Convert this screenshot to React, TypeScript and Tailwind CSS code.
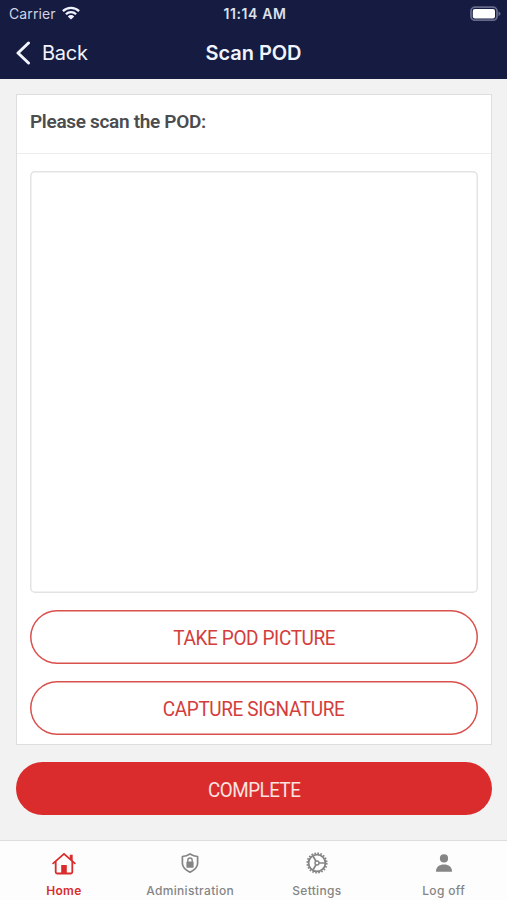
import type { ReactNode } from 'react';

export default function App() {
  return (
    <div className="flex h-[900px] w-[507px] flex-col overflow-hidden bg-[#f2f2f2] font-['Inter',sans-serif]">
      <header className="h-[79px] shrink-0 bg-[#151b41] text-[#f1f4fc]">
        <StatusBar />
        <NavBar title="Scan POD" />
      </header>

      <main className="flex-1 pt-[15px] pr-[15px] pl-4">
        <section className="h-[651px] border border-[#dedede] bg-white px-[13px]">
          <div className="-mx-[13px] h-[59px] border-b border-[#ededed] px-[13px] pt-[13px]">
            <h2 className="text-[19px] leading-[27px] font-semibold tracking-[-0.32px] whitespace-nowrap text-[#4a4c4e] font-['Roboto',sans-serif]">
              Please scan the POD:
            </h2>
          </div>
          <div className="mt-[17px] h-[422px] rounded-[5px] shadow-[inset_0_0_0_1.5px_#e3e3e3]" />
          <div className="mt-[17px] flex flex-col gap-[17px]">
            <OutlineButton>TAKE POD PICTURE</OutlineButton>
            <OutlineButton>CAPTURE SIGNATURE</OutlineButton>
          </div>
        </section>

        <button className="mt-[17px] h-[53px] w-full rounded-full bg-[#da2c2c] pt-[2px] text-[20px] tracking-[-0.5px] text-[#fbe3e1] font-['Roboto',sans-serif]">
          <span className="inline-block scale-x-94">COMPLETE</span>
        </button>
      </main>

      <nav className="grid h-[60px] shrink-0 grid-cols-4 border-t border-[#dddddd] bg-[#fdfdfd]">
        <Tab label="Home" active icon={<HomeIcon />} />
        <Tab label="Administration" icon={<ShieldIcon />} />
        <Tab label="Settings" icon={<GearIcon />} />
        <Tab label="Log off" icon={<PersonIcon />} />
      </nav>
    </div>
  );
}

function StatusBar() {
  return (
    <div className="grid h-[28px] grid-cols-3 items-center pr-[6px] pl-[9px] text-[14px] leading-none">
      <div className="flex items-center gap-[6px]">
        <span className="tracking-[0.1px] text-[#cfd3e3]">Carrier</span>
        <WifiIcon />
      </div>
      <span className="text-center text-[14px] font-semibold tracking-[0.6px] whitespace-nowrap text-[#dde1ed]">
        11:14 AM
      </span>
      <div className="flex justify-end pb-px">
        <BatteryIcon />
      </div>
    </div>
  );
}

function NavBar({ title }: { title: string }) {
  return (
    <div className="grid h-[49px] grid-cols-3 items-center px-[15px]">
      <button className="flex items-center gap-[11px] text-[20px] tracking-[-0.25px]">
        <svg width="16" height="24" viewBox="0 0 16 24" aria-hidden>
          <path
            d="M13.5 2 L3 12 L13.5 22"
            fill="none"
            stroke="currentColor"
            strokeWidth="3"
            strokeLinecap="round"
            strokeLinejoin="round"
          />
        </svg>
        Back
      </button>
      <h1 className="text-center text-[20px] font-semibold tracking-[-0.05px] whitespace-nowrap">{title}</h1>
    </div>
  );
}

function OutlineButton({ children }: { children: ReactNode }) {
  return (
    <button className="h-[54px] w-full rounded-full pt-[2px] text-[20px] tracking-[-0.4px] text-[#d33d3b] shadow-[inset_0_0_0_1.5px_#d9504d] font-['Roboto',sans-serif]">
      <span className="inline-block scale-x-95">{children}</span>
    </button>
  );
}

function Tab({ label, icon, active }: { label: string; icon: ReactNode; active?: boolean }) {
  return (
    <button
      className={`flex flex-col items-center pt-[10px] text-[12px] leading-[16px] tracking-[0.32px] ${
        active ? 'pl-px font-semibold text-[#d92d2d]' : 'font-medium text-[#858585]'
      }`}
    >
      {icon}
      <span className="mt-[8px]">{label}</span>
    </button>
  );
}

/* ---- icons ---- */

function WifiIcon() {
  return (
    <svg width="18" height="14" viewBox="0 0 18 14" className="-mt-[2px]" aria-hidden>
      <g fill="none" stroke="currentColor" strokeWidth="2.3">
        <path d="M0.9 5.1 A11.6 11.6 0 0 1 17.1 5.1" />
        <path d="M3.9 8.2 A7.3 7.3 0 0 1 14.1 8.2" />
      </g>
      <path d="M9 13.6 L5.8 10.4 A4.6 4.6 0 0 1 12.2 10.4 Z" fill="currentColor" />
    </svg>
  );
}

function BatteryIcon() {
  return (
    <svg width="31" height="16" viewBox="0 0 31 16" aria-hidden>
      <rect x="1" y="1.2" width="26" height="13" rx="4" fill="none" stroke="#666a89" strokeWidth="1.8" />
      <rect x="2.8" y="3" width="22.2" height="9.4" rx="2" fill="#fff" />
      <path d="M28.4 5.3 Q30.6 6.4 30.6 7.7 Q30.6 9 28.4 10.1 Z" fill="#666a89" />
    </svg>
  );
}

function HomeIcon() {
  return (
    <svg width="24" height="24" viewBox="0 0 24 24" aria-hidden>
      <g fill="none" stroke="currentColor" strokeLinecap="round" strokeLinejoin="round">
        <path d="M1.2 12.4 L12 2.8 L22.8 12.4" strokeWidth="1.8" />
        <path d="M3.7 10.8 V21 Q3.7 22.5 5.2 22.5 H18.8 Q20.3 22.5 20.3 21 V10.8" strokeWidth="1.8" />
      </g>
      <path d="M17.8 3.8 H20.7 V10.8 L17.8 8.2 Z M9.2 14 H14.8 V22.5 H9.2 Z" fill="currentColor" />
    </svg>
  );
}

function ShieldIcon() {
  return (
    <svg width="24" height="24" viewBox="0 0 24 24" aria-hidden>
      <path
        d="M12 2.9 Q15.6 5.1 19.6 5.5 V12.8 Q19.2 17.8 12 21.2 Q4.8 17.8 4.4 12.8 V5.5 Q8.4 5.1 12 2.9 Z"
        fill="none"
        stroke="currentColor"
        strokeWidth="1.7"
        strokeLinejoin="round"
      />
      <rect x="8.4" y="10.6" width="7.2" height="6.2" rx="0.9" fill="currentColor" />
      <path d="M9.8 11 V9.2 A2.2 2.2 0 0 1 14.2 9.2 V11" fill="none" stroke="currentColor" strokeWidth="1.4" />
    </svg>
  );
}

function GearIcon() {
  return (
    <svg width="24" height="24" viewBox="0 0 24 24" aria-hidden>
      <g fill="none" stroke="currentColor">
        {/* ring of 20 small teeth: circumference 2π·9.7 ≈ 61 */}
        <circle cx="12" cy="12" r="9.7" strokeWidth="1.8" strokeDasharray="1.65 1.4" />
        <circle cx="12" cy="12" r="8.4" strokeWidth="1.8" />
        <circle cx="12" cy="12" r="2" strokeWidth="1.4" />
        <path d="M14 12 H20.2 M11 10.3 L7.8 4.8 M11 13.7 L7.8 19.2" strokeWidth="1.7" />
      </g>
    </svg>
  );
}

function PersonIcon() {
  return (
    <svg width="24" height="24" viewBox="0 0 24 24" fill="currentColor" aria-hidden>
      <circle cx="12" cy="7.4" r="4.1" />
      <path d="M4 20.2 C4 16 7.4 13.4 12 13.4 C16.6 13.4 20 16 20 20.2 Q20 20.8 19.4 20.8 H4.6 Q4 20.8 4 20.2 Z" />
    </svg>
  );
}
